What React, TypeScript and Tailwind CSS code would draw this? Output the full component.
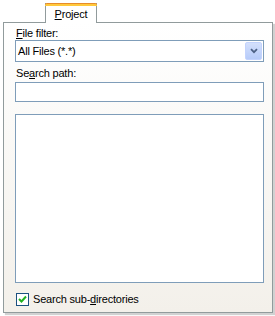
import React from 'react';

const App = () => {
  return (
    <div className="w-[275px] h-[316px] bg-white pt-[3px] pl-[3px] font-['Liberation_Sans',Tahoma,sans-serif] text-[11px] tracking-[-0.2px] text-black leading-[13px]">
      {/* Tab */}
      <div className="relative z-10 ml-[42px] -mb-px w-[52px] h-[20px] bg-white border-x border-[#919b9c] flex flex-col">
        <div className="h-[3px] bg-[#ffc83c] border-t border-[#e68b2c] -mx-px rounded-t-[2px]" />
        <div className="flex-1 flex items-center justify-center pb-[1px]">
          <span>
            <span className="underline">P</span>roject
          </span>
        </div>
      </div>

      {/* Panel */}
      <div className="relative w-[270px] h-[291px] border border-[#919b9c] bg-gradient-to-b from-white to-[#f3f0ea] shadow-[2px_2px_1px_rgba(0,0,0,0.18)] pl-[11px] pr-[8px] pt-[4px] flex flex-col">
        <div className="h-[13px] pl-px">
          <span className="underline">F</span>ile filter:
        </div>
        <div className="h-[22px] border border-[#7f9db9] bg-white flex items-center pl-[2px] pr-px">
          <span className="flex-1">All Files (*.*)</span>
          <div className="w-[17px] h-[18px] rounded-[2px] bg-gradient-to-b from-[#d4e0fc] to-[#b6cbf9] border border-[#c3d3fd] flex items-center justify-center">
            <svg width="8" height="6" viewBox="0 0 8 6">
              <path d="M1 1.2 L4 4.2 L7 1.2" fill="none" stroke="#4d6185" strokeWidth="1.8" />
            </svg>
          </div>
        </div>
        <div className="h-[13px] mt-[5px] pl-px">
          Se<span className="underline">a</span>rch path:
        </div>
        <div className="h-[20px] mt-[2px] border border-[#7f9db9] bg-white" />
        <div className="h-[169px] mt-[12px] border border-[#7f9db9] bg-white" />
        <label className="flex items-center mt-[10px] ml-px">
          <span className="w-[13px] h-[13px] border border-[#1c5180] bg-white flex items-center justify-center">
            <svg width="9" height="9" viewBox="0 0 9 9">
              <path d="M1 4 L3.5 6.5 L8 1.5" fill="none" stroke="#21b121" strokeWidth="2" />
            </svg>
          </span>
          <span className="ml-[4px]">
            Search sub-<span className="underline">d</span>irectories
          </span>
        </label>
      </div>
    </div>
  );
};

export default App;
